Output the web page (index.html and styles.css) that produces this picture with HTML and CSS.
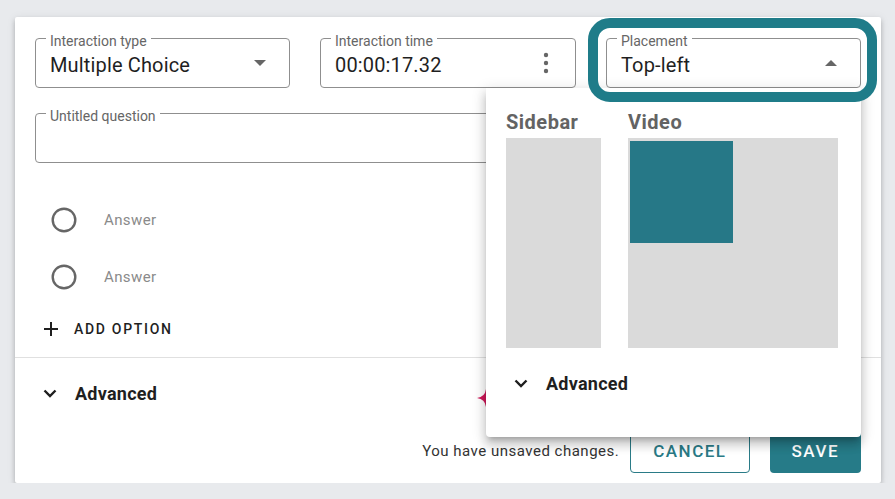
FILE: index.html
```html
<!DOCTYPE html>
<html lang="en">
<head>
    <meta charset="UTF-8">
    <meta name="viewport" content="width=device-width, initial-scale=1.0">
    <title>Interaction Editor</title>
    <link rel="stylesheet" href="styles.css">
</head>
<body>
    <div class="card">
        <!-- Top row: type, time, placement -->
        <div class="top-row">
            <div class="field">
                <span class="field-label">Interaction type</span>
                <span class="field-value">Multiple Choice</span>
                <span class="caret caret-down"></span>
            </div>
            <div class="field">
                <span class="field-label">Interaction time</span>
                <span class="field-value">00:00:17.32</span>
                <svg class="kebab" width="24" height="24" viewBox="0 0 24 24">
                    <circle cx="12" cy="4" r="2.2"/>
                    <circle cx="12" cy="12" r="2.2"/>
                    <circle cx="12" cy="20" r="2.2"/>
                </svg>
            </div>
            <div class="placement">
                <div class="field">
                    <span class="field-label">Placement</span>
                    <span class="field-value">Top-left</span>
                    <span class="caret caret-up"></span>
                </div>
                <div class="focus-ring"></div>

                <!-- Placement menu -->
                <div class="menu">
                    <div class="layout">
                        <div class="layout-col">
                            <div class="layout-title">Sidebar</div>
                            <div class="sidebar-box"></div>
                        </div>
                        <div class="layout-col">
                            <div class="layout-title">Video</div>
                            <div class="video-box">
                                <div class="video-slot"></div>
                            </div>
                        </div>
                    </div>
                    <div class="advanced menu-advanced">
                        <svg class="chevron" width="14" height="9" viewBox="0 0 14 9"><polyline points="1.5,1.5 7,7 12.5,1.5"/></svg>
                        <span>Advanced</span>
                    </div>
                </div>
            </div>
        </div>

        <div class="field question">
            <span class="field-label">Untitled question</span>
        </div>

        <!-- Answer options -->
        <ul class="options">
            <li class="option">
                <svg class="radio" width="26" height="26" viewBox="0 0 26 26"><circle cx="13" cy="13" r="11.3"/></svg>
                <span class="option-text">Answer</span>
            </li>
            <li class="option">
                <svg class="radio" width="26" height="26" viewBox="0 0 26 26"><circle cx="13" cy="13" r="11.3"/></svg>
                <span class="option-text">Answer</span>
            </li>
        </ul>
        <button class="add-option">
            <svg width="14" height="14" viewBox="0 0 14 14"><path d="M7 0v14M0 7h14"/></svg>
            ADD OPTION
        </button>

        <hr class="divider">

        <div class="advanced">
            <svg class="chevron" width="14" height="9" viewBox="0 0 14 9"><polyline points="1.5,1.5 7,7 12.5,1.5"/></svg>
            <span>Advanced</span>
        </div>

        <svg class="sparkle" width="18" height="18" viewBox="0 0 18 18">
            <path d="M9 0Q10 8 18 9Q10 10 9 18Q8 10 0 9Q8 8 9 0Z"/>
        </svg>

        <div class="footer">
            <span class="unsaved">You have unsaved changes.</span>
            <button class="btn btn-outline">CANCEL</button>
            <button class="btn btn-fill">SAVE</button>
        </div>
    </div>
</body>
</html>
```

FILE: styles.css
```css
body {
    margin: 0;
    padding: 17px 0 0 15px;
    background-color: #e8eaed;
    font-family: Roboto, "Noto Sans", sans-serif;
    color: #1f1f1f;
}
.card {
    position: relative;
    width: 866px;
    height: 466px;
    box-sizing: border-box;
    padding: 21px 20px 10px;
    background-color: #fff;
    border-radius: 2px;
    box-shadow: 0 3px 5px rgba(0,0,0,0.22), 0 1px 10px rgba(0,0,0,0.08);
}

/* Outlined fields */
.top-row {
    display: grid;
    grid-template-columns: 255px 256px 255px;
    column-gap: 30px;
}
.field {
    position: relative;
    height: 50px;
    box-sizing: border-box;
    display: flex;
    align-items: center;
    padding: 3px 17px 0 14px;
    border: 1px solid #8f8f8f;
    border-radius: 4px;
}
.field-label {
    position: absolute;
    left: 10px;
    top: -6px;
    padding: 0 4px;
    background-color: #fff;
    font-size: 14px;
    line-height: 16px;
    color: #666;
}
.field-value {
    flex: 1;
    font-size: 20px;
    line-height: 24px;
    letter-spacing: 0.15px;
}
.caret {
    width: 0;
    height: 0;
    border-left: 6px solid transparent;
    border-right: 6px solid transparent;
    margin: 0 6px 3px 0;
}
.caret-down { border-top: 6px solid #666; }
.caret-up { border-bottom: 6px solid #666; margin-bottom: 4px; }
.kebab { fill: #666; margin-bottom: 3px; }

.placement { position: relative; }
.focus-ring {
    position: absolute;
    left: -18px;
    top: -20px;
    right: -16px;
    bottom: -14px;
    border: 10px solid #1f7c89;
    border-radius: 22px;
    z-index: 3;
    pointer-events: none;
}

/* Placement menu */
.menu {
    position: absolute;
    top: 100%;
    right: 0;
    width: 375px;
    height: 349px;
    box-sizing: border-box;
    padding: 22px 23px 0 20px;
    background-color: #fff;
    border-radius: 0 0 4px 4px;
    z-index: 2;
    box-shadow: 0 5px 5px -3px rgba(0,0,0,0.2), 0 8px 10px 1px rgba(0,0,0,0.14), 0 3px 14px 2px rgba(0,0,0,0.12);
}
.layout { display: flex; gap: 27px; }
.layout-title {
    font-size: 20px;
    line-height: 24px;
    font-weight: 700;
    letter-spacing: 0.5px;
    color: #636363;
    margin-bottom: 4px;
}
.sidebar-box {
    width: 95px;
    height: 210px;
    background-color: #dadada;
}
.video-box {
    width: 210px;
    height: 210px;
    box-sizing: border-box;
    padding: 3px 2px;
    background-color: #dadada;
}
.video-slot {
    width: 103px;
    height: 102px;
    background-color: #267887;
}

.question { margin-top: 25px; }

/* Options */
.options {
    list-style: none;
    margin: 28px 0 0;
    padding: 0;
}
.option {
    height: 57px;
    display: flex;
    align-items: center;
    padding-left: 16px;
}
.radio { fill: none; stroke: #666; stroke-width: 2.4; margin-right: 27px; }
.option-text {
    font-size: 15px;
    color: #8a8a8a;
    letter-spacing: 0.4px;
}
.add-option {
    display: flex;
    align-items: center;
    gap: 16px;
    height: 48px;
    padding: 0 0 0 9px;
    border: none;
    background: none;
    font-family: inherit;
    font-size: 14px;
    font-weight: 500;
    letter-spacing: 1.7px;
    color: #1f1f1f;
}
.add-option svg { stroke: #1f1f1f; stroke-width: 2; }

.divider {
    height: 0;
    margin: 4px -20px 0;
    border: none;
    border-top: 1px solid #e0e0e0;
}

.advanced {
    display: flex;
    align-items: center;
    gap: 18px;
    height: 48px;
    margin-top: 11px;
    font-size: 18px;
    font-weight: 700;
    letter-spacing: 0.25px;
    color: #1f1f1f;
}
.menu-advanced { height: 24px; margin-top: 23px; }
.chevron {
    margin-left: 8px;
    fill: none;
    stroke: #1f1f1f;
    stroke-width: 2.4;
}
.sparkle {
    position: absolute;
    left: 462px;
    top: 372px;
    fill: #d0195a;
}

/* Footer */
.footer {
    display: flex;
    justify-content: flex-end;
    align-items: center;
    height: 45px;
    margin-top: 11px;
}
.unsaved {
    margin-right: 11px;
    font-size: 15px;
    color: #333;
    letter-spacing: 0.5px;
}
.btn {
    height: 45px;
    box-sizing: border-box;
    padding: 0 22px;
    border-radius: 4px;
    font-family: inherit;
    font-size: 17px;
    font-weight: 500;
    letter-spacing: 1.5px;
    cursor: pointer;
}
.btn-outline {
    margin-right: 20px;
    border: 1px solid #2a7b87;
    background-color: #fff;
    color: #2a7a86;
}
.btn-fill {
    border: none;
    background-color: #267b88;
    color: #fff;
}
```
